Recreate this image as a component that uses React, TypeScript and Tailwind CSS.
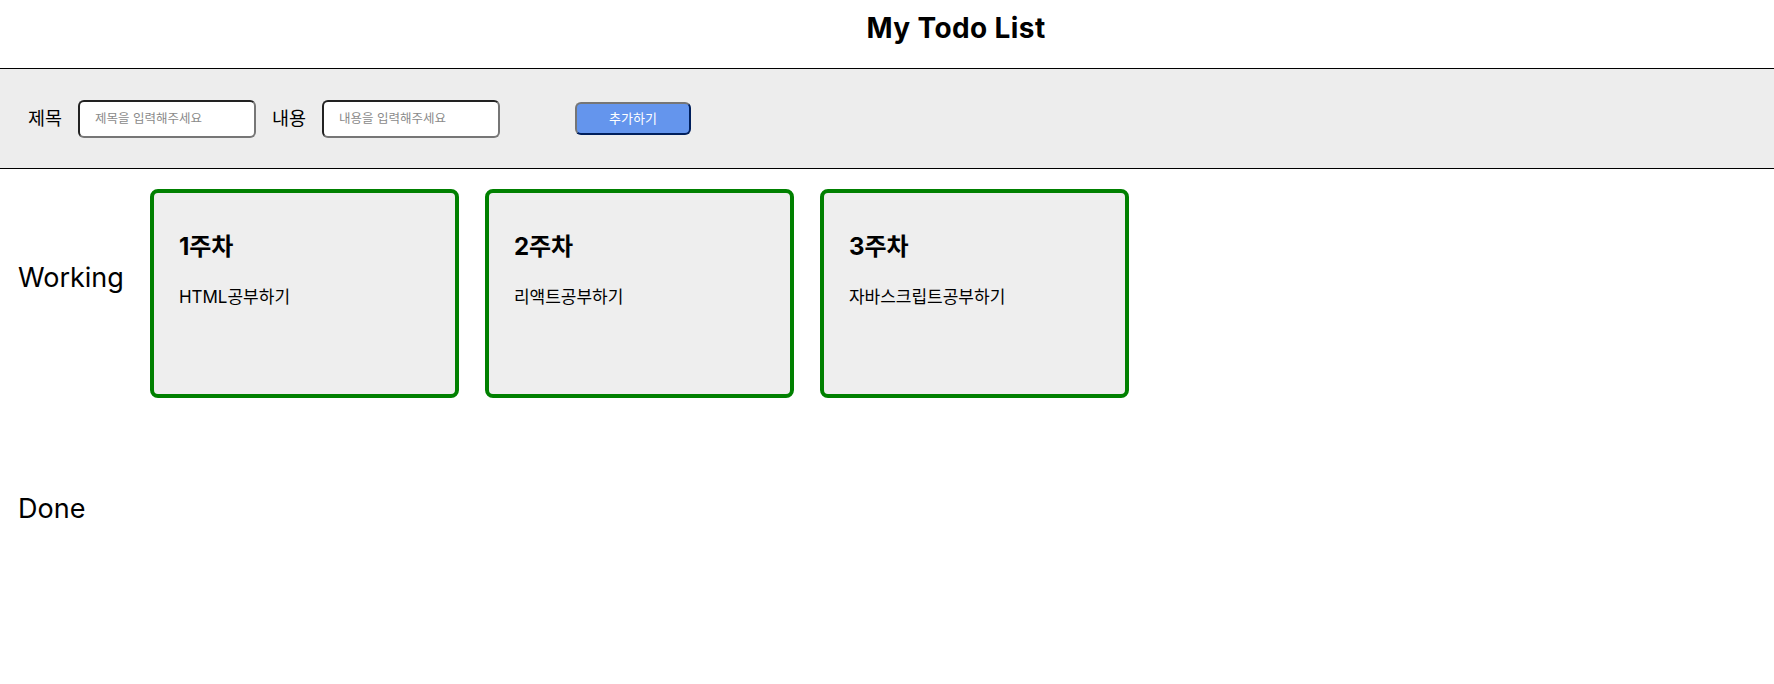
// todo list board
import React, { useState } from "react";

interface Todo {
  id: number;
  title: string;
  body: string;
  isDone: boolean;
}

const initialTodos: Todo[] = [
  { id: 1, title: "1주차", body: "HTML공부하기", isDone: false },
  { id: 2, title: "2주차", body: "리액트공부하기", isDone: false },
  { id: 3, title: "3주차", body: "자바스크립트공부하기", isDone: false },
];

const TodoCard: React.FC<{ todo: Todo }> = ({ todo }) => (
  <div className="w-[309px] h-[209px] shrink-0 border-4 border-[#008000] rounded-lg bg-[#eeeeee] px-[25px]">
    <h3 className="mt-[42px] text-[24px] font-bold leading-none">{todo.title}</h3>
    <p className="mt-[30px] text-[17px] leading-none">{todo.body}</p>
  </div>
);

export default function App() {
  const [todos, setTodos] = useState<Todo[]>(initialTodos);
  const [title, setTitle] = useState("");
  const [body, setBody] = useState("");

  const addTodo = () => {
    if (!title.trim() || !body.trim()) return;
    setTodos([...todos, { id: Date.now(), title, body, isDone: false }]);
    setTitle("");
    setBody("");
  };

  const working = todos.filter((t) => !t.isDone);
  const done = todos.filter((t) => t.isDone);

  return (
    <div className="min-h-[684px] bg-white text-black font-['Inter','Noto_Sans_CJK_KR',sans-serif]">
      <header className="h-[68px] flex justify-center pl-[138px]">
        <h1 className="mt-[14px] text-[28px] font-bold leading-none tracking-[0.4px]">My Todo List</h1>
      </header>

      <div className="h-[101px] border-y border-black bg-[#ededed] flex items-center gap-4 pl-[28px]">
        <label className="w-[34px] text-[18.5px] leading-none whitespace-nowrap">제목</label>
        <input
          className="w-[178px] h-[38px] rounded-md border-2 border-t-[#222222] border-l-[#222222] border-r-[#767676] border-b-[#767676] bg-white pl-[15px] text-[12.5px] placeholder:text-[#8a8a8a] outline-none"
          placeholder="제목을 입력해주세요"
          value={title}
          onChange={(e) => setTitle(e.target.value)}
        />
        <label className="w-[34px] text-[18.5px] leading-none whitespace-nowrap">내용</label>
        <input
          className="w-[178px] h-[38px] rounded-md border-2 border-t-[#222222] border-l-[#222222] border-r-[#767676] border-b-[#767676] bg-white pl-[15px] text-[12.5px] placeholder:text-[#8a8a8a] outline-none"
          placeholder="내용을 입력해주세요"
          value={body}
          onChange={(e) => setBody(e.target.value)}
        />
        <button
          type="button"
          onClick={addTodo}
          className="ml-[59px] w-[116px] h-[33px] rounded-md border-2 border-t-[#767676] border-l-[#767676] border-r-[#001f5c] border-b-[#001f5c] bg-[#6495ed] text-white text-[13px]"
        >
          추가하기
        </button>
      </div>

      <section className="mt-[20px] flex items-start gap-[26px] pl-[18px]">
        <h2 className="mt-[75px] text-[27px] leading-none">Working</h2>
        {working.map((t) => (
          <TodoCard key={t.id} todo={t} />
        ))}
      </section>

      <section className="mt-[97px] flex items-start gap-[26px] pl-[18px]">
        <h2 className="text-[27px] leading-none">Done</h2>
        {done.map((t) => (
          <TodoCard key={t.id} todo={t} />
        ))}
      </section>
    </div>
  );
}
